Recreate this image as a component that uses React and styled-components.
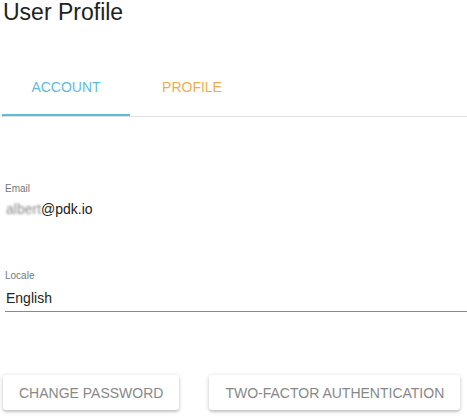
import React from 'react';
import styled, { createGlobalStyle } from 'styled-components';

const GlobalStyle = createGlobalStyle`
  body {
    margin: 0;
    background: #fff;
    font-family: "Liberation Sans", Arial, sans-serif;
  }
`;

const Page = styled.div`
  width: 467px;
  height: 416px;
  overflow: hidden;
`;

const Title = styled.h2`
  margin: 0;
  padding-left: 3px;
  font-size: 23px;
  line-height: 24px;
  font-weight: 400;
  color: #222;
`;

const TabBar = styled.div`
  display: flex;
  margin: 35px 0 0 2px;
  height: 57px;
  border-bottom: 1px solid #e0e0e0;
`;

const Tab = styled.div`
  position: relative;
  width: ${p => p.w}px;
  display: flex;
  align-items: center;
  justify-content: center;
  padding-bottom: 1px;
  font-size: 14px;
  color: ${p => p.color};

  &::after {
    content: '';
    position: absolute;
    left: 0;
    right: 0;
    bottom: 0;
    height: 2px;
    background: ${p => (p.active ? '#5bbcdc' : 'transparent')};
  }
`;

const Form = styled.div`
  padding: 66px 0 0 5px;
`;

const Field = styled.div`
  margin-bottom: ${p => p.gap || 0}px;
`;

const Label = styled.div`
  font-size: 10px;
  line-height: 12px;
  color: #777;
`;

const Value = styled.div`
  margin-top: ${p => (p.underline ? 6 : 4)}px;
  font-size: 14px;
  line-height: 20px;
  color: #222;
  padding-left: 1px;
  padding-bottom: ${p => (p.underline ? 3 : 0)}px;
  border-bottom: ${p => (p.underline ? '1px solid #888' : 'none')};
`;

const Blurred = styled.span`
  display: inline-block;
  color: #8a8a8a;
  filter: blur(1px);
`;

const Actions = styled.div`
  display: flex;
  gap: 30px;
  padding: 63px 0 0 3px;
`;

const Button = styled.button`
  height: 35px;
  padding: 0 16px;
  border: none;
  border-radius: 3px;
  background: #fff;
  font-family: inherit;
  font-size: 14px;
  color: #888;
  text-transform: uppercase;
  box-shadow: 0 1px 5px rgba(0, 0, 0, 0.18), 0 2px 2px rgba(0, 0, 0, 0.12);
  cursor: pointer;
`;

export default function App() {
  return (
    <Page>
      <GlobalStyle />
      <Title>User Profile</Title>
      <TabBar>
        <Tab w={128} active color="#5bbcdc">ACCOUNT</Tab>
        <Tab w={124} color="#f0ad4e">PROFILE</Tab>
      </TabBar>
      <Form>
        <Field gap={51}>
          <Label>Email</Label>
          <Value><Blurred>albert</Blurred>@pdk.io</Value>
        </Field>
        <Field>
          <Label>Locale</Label>
          <Value underline>English</Value>
        </Field>
      </Form>
      <Actions>
        <Button>Change Password</Button>
        <Button>Two-Factor Authentication</Button>
      </Actions>
    </Page>
  );
}
